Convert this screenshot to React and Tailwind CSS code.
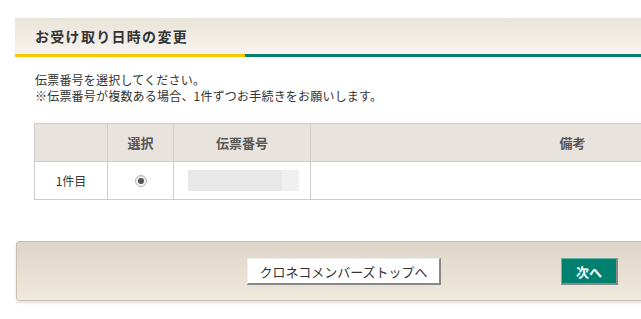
import React from "react";

export default function App() {
  const jp = { fontFamily: '"Noto Sans CJK JP", "Noto Sans", sans-serif' };
  return (
    <div className="w-[641px] h-[319px] overflow-hidden bg-white" style={jp}>
      <div className="w-[860px] pt-[18px] pl-[15px]">
        {/* Header band */}
        <div className="w-[840px]">
          <div className="h-[36px] bg-gradient-to-b from-[#e9e4d9] to-[#f7f4ef] flex items-center pl-[20px]">
            <h1 className="text-[14px] font-bold text-[#333] tracking-[1.3px] leading-none">お受け取り日時の変更</h1>
          </div>
          <div className="flex h-[3px]">
            <div className="w-[230px] bg-[#f5c800]" />
            <div className="flex-1 bg-[#00806e]" />
          </div>
        </div>

        {/* Instructions */}
        <div className="pl-[20px] pt-[15px] text-[12px] leading-[16px] tracking-[0.2px] text-[#333]">
          <p>伝票番号を選択してください。</p>
          <p>※伝票番号が複数ある場合、1件ずつお手続きをお願いします。</p>
        </div>

        {/* Table */}
        <table className="ml-[19px] mt-[19px] w-[801px] border-collapse text-[12px] text-[#333]">
          <thead>
            <tr className="h-[38px] bg-[#e8e4dd]">
              <th className="w-[73px] border border-[#ccc]"></th>
              <th className="w-[66px] border border-[#ccc] text-[13px] font-bold text-[#555]">選択</th>
              <th className="w-[137px] border border-[#ccc] text-[13px] font-bold text-[#555]">伝票番号</th>
              <th className="border border-[#ccc] text-[13px] font-bold text-[#555]">備考</th>
            </tr>
          </thead>
          <tbody>
            <tr className="h-[38px]">
              <td className="border border-[#ccc] text-center">1件目</td>
              <td className="border border-[#ccc]">
                <div className="flex justify-center">
                  <span className="w-[12px] h-[12px] rounded-full border border-[#b5b5b5] bg-gradient-to-b from-[#e6e6e6] to-[#fafafa] flex items-center justify-center">
                    <span className="w-[6px] h-[6px] rounded-full bg-[#555]" />
                  </span>
                </div>
              </td>
              <td className="border border-[#ccc]">
                <div className="ml-[14px] flex h-[21px] w-[111px]">
                  <div className="w-[94px] bg-[#e8e8e8]" />
                  <div className="flex-1 bg-[#f0f0f0]" />
                </div>
              </td>
              <td className="border border-[#ccc]"></td>
            </tr>
          </tbody>
        </table>

        {/* Footer */}
        <div className="ml-[1px] mt-[41px] w-[838px] h-[60px] rounded-[3px] border border-[#c9c0ad] bg-gradient-to-b from-[#ddd6c8] to-[#efe8dc] shadow-[0_2px_3px_rgba(0,0,0,0.12)] flex items-center">
          <div className="ml-[230px] mt-[1px]">
            <button className="w-[194px] h-[27px] bg-white border-r-2 border-b-2 border-[#888] border-l border-t border-l-[#eee] border-t-[#eee] text-[13px] text-[#333]">
              クロネコメンバーズトップへ
            </button>
          </div>
          <div className="ml-[120px] mt-[1px]">
            <button className="w-[57px] h-[27px] bg-[#00806e] border-r-2 border-b-2 border-[#888] border-l border-t border-l-[#66b3a8] border-t-[#66b3a8] text-[13px] font-bold text-white">
              次へ
            </button>
          </div>
        </div>
      </div>
    </div>
  );
}
